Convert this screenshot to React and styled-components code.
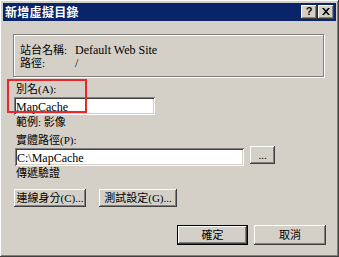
import React from 'react'
import styled, { createGlobalStyle, css } from 'styled-components'

const GlobalStyle = createGlobalStyle`
    html, body {
        margin: 0;
        padding: 0;
        background: #d4d0c8;
    }
    * {
        box-sizing: border-box;
    }
`;

const FONT = `"Liberation Serif", "Noto Sans CJK TC", serif`;

const raised = css`
    background: #d4d0c8;
    box-shadow:
        inset -1px -1px #404040,
        inset 1px 1px #ffffff,
        inset -2px -2px #808080,
        inset 2px 2px #d4d0c8;
`;

const Window = styled.div`
    ${raised};
    width: 339px;
    height: 257px;
    padding: 3px;
    display: flex;
    flex-direction: column;
    font-family: ${FONT};
    font-size: 11px;
    color: #000;
`;

const TitleBar = styled.div`
    height: 18px;
    background: #0a246a;
    display: flex;
    align-items: center;
    padding: 0 2px 0 2px;
`;

const Title = styled.span`
    flex: 1;
    color: #fff;
    font-family: "Noto Sans CJK TC", sans-serif;
    font-weight: bold;
    font-size: 12px;
    line-height: 18px;
    letter-spacing: 0.3px;
`;

const CaptionButton = styled.div`
    ${raised};
    width: 16px;
    height: 14px;
    margin-left: ${p => p.$gap || 0}px;
    display: flex;
    align-items: center;
    justify-content: center;
    font-family: "Liberation Sans", sans-serif;
    font-weight: bold;
    font-size: 11px;
    line-height: 1;
    padding-bottom: 1px;
`;

const Content = styled.div`
    flex: 1;
    display: flex;
    flex-direction: column;
    padding: 13px 10px 0 10px;
`;

const GroupBox = styled.div`
    height: 43px;
    margin-right: 2px;
    border: 1px solid #808080;
    box-shadow: inset 1px 1px #ffffff, 1px 1px #ffffff;
    padding: 9px 0 0 6px;
    display: grid;
    grid-template-columns: 55px 1fr;
    grid-auto-rows: 13px;
    line-height: 13px;
    font-size: 11px;
`;

const Value = styled.span`
    font-size: 12px;
`;

const Field = styled.div`
    position: relative;
    display: flex;
    flex-direction: column;
    margin-top: ${p => p.$top || 0}px;
`;

const Label = styled.div`
    line-height: 14px;
    height: 14px;
    padding-left: 3px;
    white-space: nowrap;
    margin-top: ${p => p.$top || 0}px;
`;

const TextBox = styled.input`
    width: ${p => p.$width}px;
    height: 18px;
    margin: ${p => p.$top || 0}px 0 0 1px;
    border: none;
    outline: none;
    background: #fff;
    padding: 2px 2px 0 2px;
    font-family: ${FONT};
    font-size: 12px;
    color: #000;
    box-shadow:
        inset 1px 1px #808080,
        inset -1px -1px #ffffff,
        inset 2px 2px #404040,
        inset -2px -2px #d4d0c8;
`;

const Highlight = styled.div`
    position: absolute;
    left: -6px;
    top: -3px;
    width: 80px;
    height: 34px;
    border: 2px solid #e8282a;
    pointer-events: none;
`;

const Row = styled.div`
    display: flex;
    align-items: flex-start;
    gap: ${p => p.$gap || 0}px;
    margin-top: ${p => p.$top || 0}px;
    justify-content: ${p => (p.$end ? 'flex-end' : 'flex-start')};
    padding-left: ${p => (p.$end ? 0 : 1)}px;
`;

const Button = styled.button`
    ${raised};
    width: ${p => p.$width}px;
    height: ${p => p.$height || 18}px;
    margin-top: ${p => p.$top || 0}px;
    border: none;
    padding: 0;
    font-family: ${FONT};
    font-size: 11px;
    white-space: nowrap;
    color: #000;
    line-height: 1;
    ${p => p.$default && css`
        box-shadow:
            inset 0 0 0 1px #000,
            inset -2px -2px #404040,
            inset 2px 2px #ffffff,
            inset -3px -3px #808080;
    `}
`;

function CloseGlyph() {
    return (
        <svg width="8" height="7" viewBox="0 0 8 7">
            <path d="M0 0h2l2 2.2L6 0h2L5 3.5 8 7H6L4 4.8 2 7H0l3-3.5z" fill="#000" />
        </svg>
    );
}

export default function App() {
    return (
        <>
            <GlobalStyle />
            <Window>
                <TitleBar>
                    <Title>新增虛擬目錄</Title>
                    <CaptionButton>?</CaptionButton>
                    <CaptionButton $gap={1}><CloseGlyph /></CaptionButton>
                </TitleBar>
                <Content>
                    <GroupBox>
                        <span>站台名稱:</span>
                        <Value>Default Web Site</Value>
                        <span>路徑:</span>
                        <Value>/</Value>
                    </GroupBox>
                    <Field $top={5}>
                        <Label>別名(A):</Label>
                        <TextBox $width={141} $top={1} defaultValue="MapCache" readOnly />
                        <Highlight />
                    </Field>
                    <Label>範例: 影像</Label>
                    <Label $top={4}>實體路徑(P):</Label>
                    <Row $gap={6}>
                        <TextBox $width={229} $top={1} defaultValue="C:\MapCache" readOnly />
                        <Button $width={25} $top={-1}>...</Button>
                    </Row>
                    <Label>傳遞驗證</Label>
                    <Row $gap={13} $top={9}>
                        <Button $width={72}>連線身分(C)...</Button>
                        <Button $width={78}>測試設定(G)...</Button>
                    </Row>
                    <Row $end $gap={6} $top={18}>
                        <Button $width={71} $height={20} $default>確定</Button>
                        <Button $width={72} $height={20}>取消</Button>
                    </Row>
                </Content>
            </Window>
        </>
    );
}
